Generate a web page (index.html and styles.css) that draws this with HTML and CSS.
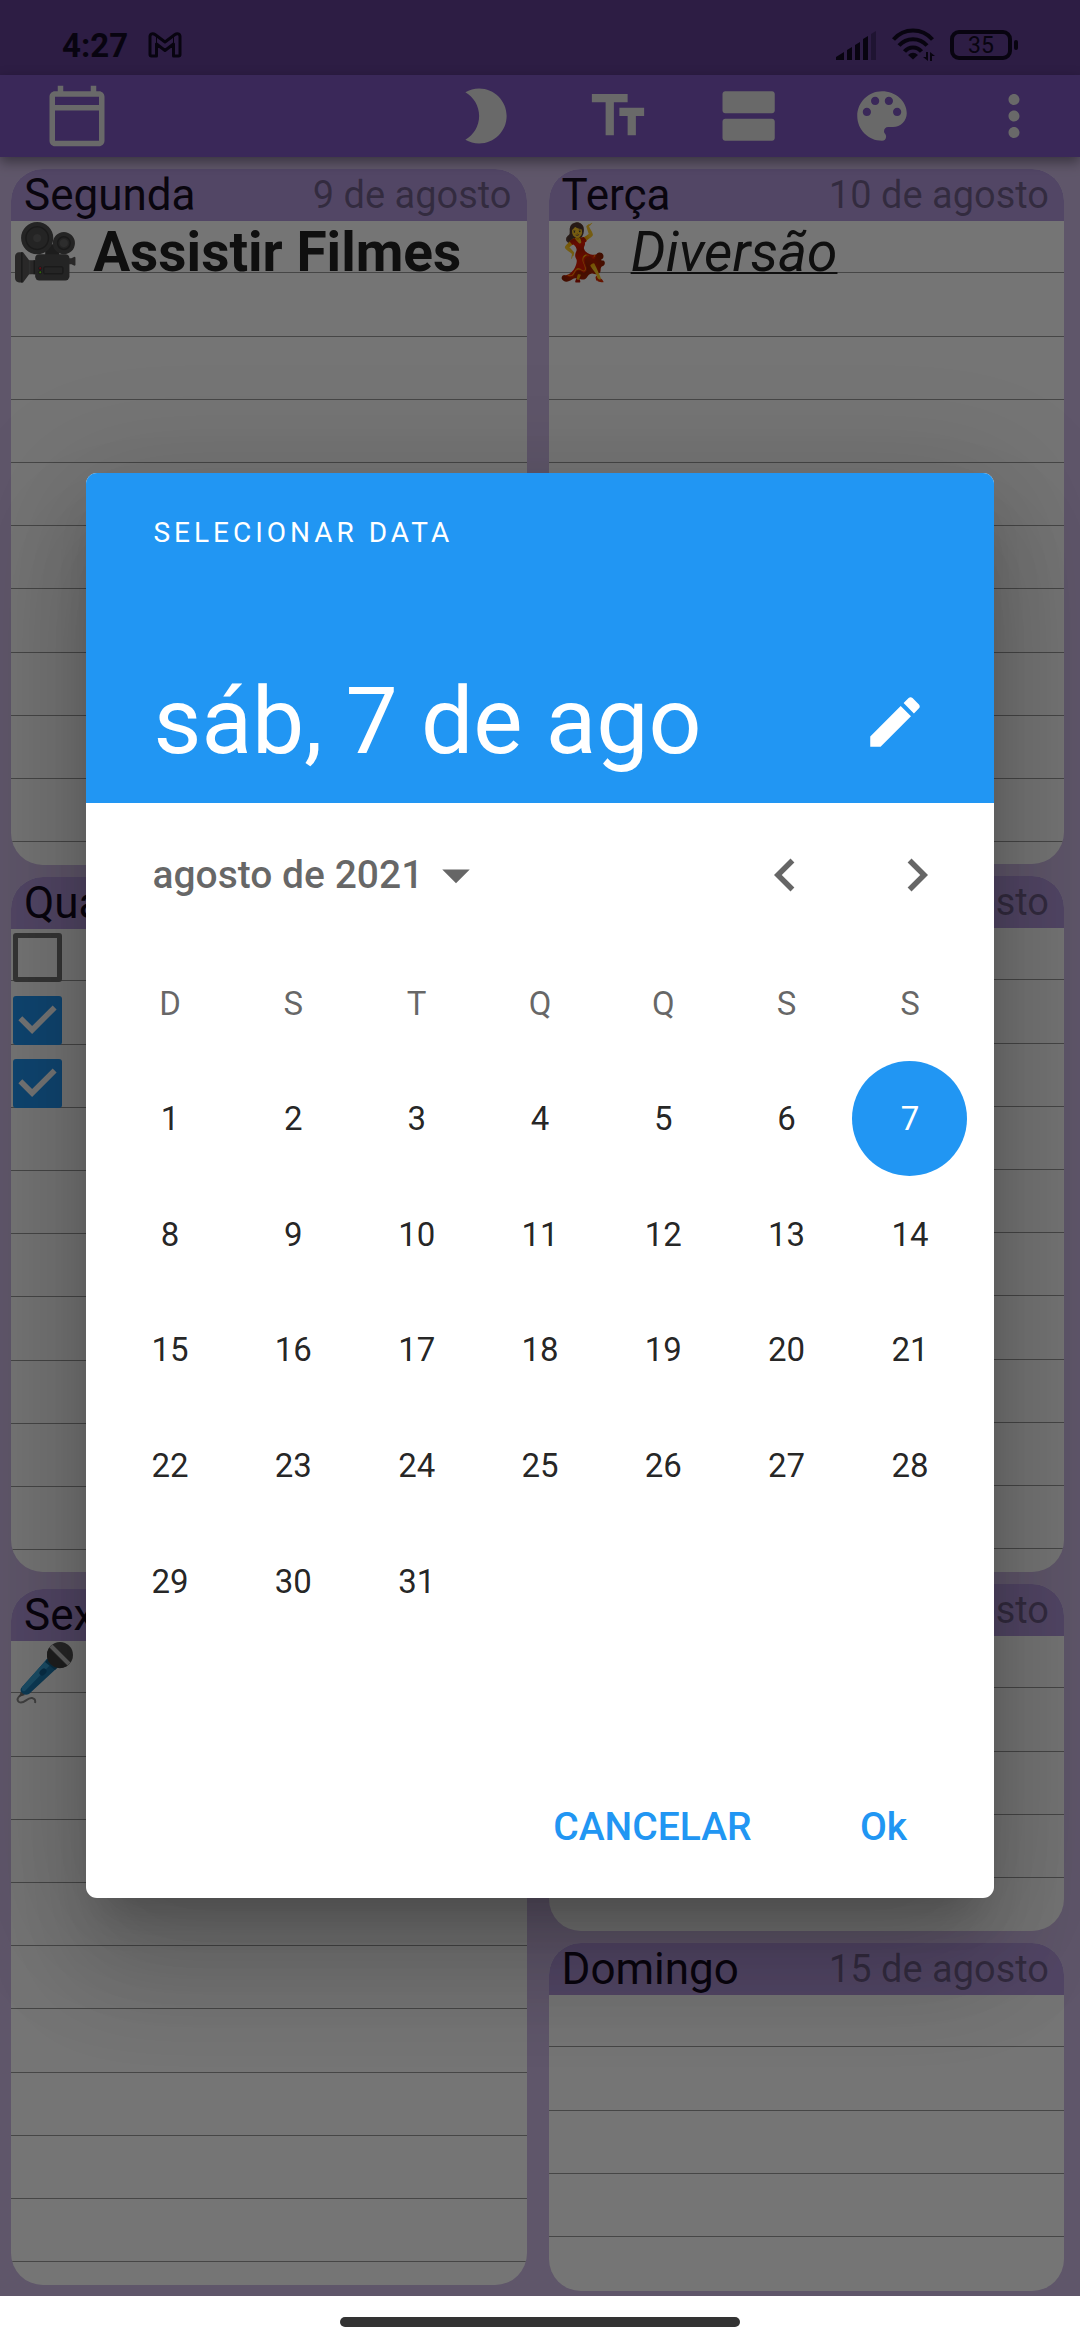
FILE: index.html
```html
<!DOCTYPE html>
<html lang="pt-BR">
<head>
<meta charset="utf-8">
<meta name="viewport" content="width=device-width, initial-scale=1">
<title>Agenda semanal</title>
<link rel="stylesheet" href="styles.css">
</head>
<body>
<div class="screen">
  <div class="status-bar">
    <span class="status-time">4:27</span>
    <svg class="status-mail" viewBox="0 0 34 26" aria-hidden="true"><path d="M2 4.500C2 1.500 5 1 7 2.500L17 10 27 2.500C29 1 32 1.500 32 4.500V22.500Q32 24 30.500 24H25.500V12L17 18.500 8.500 12V24H3.500Q2 24 2 22.500Z" fill="none" stroke="currentColor" stroke-width="3" stroke-linejoin="round"/><path d="M8.500 12V4M25.500 12V4" stroke="currentColor" stroke-width="1"/></svg>
    <svg class="status-signal" viewBox="0 0 40 29" aria-hidden="true"><path d="M0 29v-3l8-5v8zM11 29V19l5-3v13zM19 29V14l5-3v18zM27 29V8l5-3v24z" fill="currentColor"/><path d="M35 29V3l5-3v29z" fill="currentColor" opacity=".35"/></svg>
    <svg class="status-wifi" viewBox="0 0 42 34" aria-hidden="true"><g fill="none" stroke="currentColor" stroke-width="4"><path d="M1.500 11.500C12 -.5 30 -.5 40.500 11.500"/><path d="M7 17.500C14.500 9 27.500 9 35 17.500"/><path d="M12.500 23.500C17 18 25 18 29.500 23.500"/></g><path d="M16 27Q21 22.500 26 27L21 31.500z" fill="currentColor"/><path d="M36 24v9l-5-4h3v-5zM38 33v-9l5 4h-3v5z" fill="currentColor"/></svg>
    <span class="battery"><span class="battery-case">35</span><span class="battery-tip"></span></span>
  </div>

  <header class="app-bar">
    <button class="bar-button bar-button-start" aria-label="Calendário"><svg class="icon" viewBox="0 0 24 24"><path d="M20 3h-1V1h-2v2H7V1H5v2H4c-1.100 0-2 .9-2 2v16c0 1.100.9 2 2 2h16c1.100 0 2-.9 2-2V5c0-1.100-.9-2-2-2zm0 18H4V10h16v11zm0-13H4V5h16v3z"/></svg></button>
    <button class="bar-button" aria-label="Modo noturno"><svg class="icon" viewBox="0 0 24 24"><path d="M9.500 2c-1.820 0-3.530.5-5 1.350 2.990 1.730 5 4.950 5 8.650s-2.010 6.920-5 8.650c1.470.85 3.180 1.350 5 1.350 5.520 0 10-4.480 10-10S15.020 2 9.500 2z"/></svg></button>
    <button class="bar-button" aria-label="Tamanho do texto"><svg class="icon" viewBox="0 0 24 24"><path d="M2.500 4v3h5v12h3V7h5V4h-13zm19 5h-9v3h3v7h3v-7h3V9z"/></svg></button>
    <button class="bar-button" aria-label="Visualização"><svg class="icon" viewBox="0 0 24 24"><path d="M20 13H3c-.55 0-1 .45-1 1v6c0 .55.45 1 1 1h17c.55 0 1-.45 1-1v-6c0-.55-.45-1-1-1zm0-10H3c-.55 0-1 .45-1 1v6c0 .55.45 1 1 1h17c.55 0 1-.45 1-1V4c0-.55-.45-1-1-1z"/></svg></button>
    <button class="bar-button" aria-label="Cores"><svg class="icon" viewBox="0 0 24 24"><path d="M12 3c-4.970 0-9 4.030-9 9s4.030 9 9 9c.83 0 1.500-.67 1.500-1.500 0-.39-.15-.74-.39-1.010-.23-.26-.38-.61-.38-.99 0-.83.67-1.500 1.500-1.500H16c2.760 0 5-2.240 5-5 0-4.420-4.030-8-9-8zm-5.500 9c-.83 0-1.500-.67-1.500-1.500S5.670 9 6.500 9 8 9.670 8 10.500 7.330 12 6.500 12zm3-4C8.670 8 8 7.330 8 6.500S8.670 5 9.500 5s1.500.67 1.500 1.500S10.330 8 9.500 8zm5 0c-.83 0-1.500-.67-1.500-1.500S13.670 5 14.500 5s1.500.67 1.500 1.500S15.330 8 14.500 8zm3 4c-.83 0-1.500-.67-1.500-1.500S16.670 9 17.500 9s1.500.67 1.500 1.500-.67 1.500-1.500 1.500z"/></svg></button>
    <button class="bar-button" aria-label="Mais opções"><svg class="icon" viewBox="0 0 24 24"><path d="M12 8c1.100 0 2-.9 2-2s-.9-2-2-2-2 .9-2 2 .9 2 2 2zm0 2c-1.100 0-2 .9-2 2s.9 2 2 2 2-.9 2-2-.9-2-2-2zm0 6c-1.100 0-2 .9-2 2s.9 2 2 2 2-.9 2-2-.9-2-2-2z"/></svg></button>
  </header>

  <main class="planner">
    <div class="column column-left">
      <section class="day">
        <div class="day-head"><h2 class="day-name">Segunda</h2><span class="day-date">9 de agosto</span></div>
        <div class="day-lines"><p class="note note-bold"><span class="emoji">🎥</span> Assistir Filmes</p></div>
      </section>
      <section class="day">
        <div class="day-head"><h2 class="day-name">Quarta</h2></div>
        <div class="day-lines">
          <div class="task"><input class="tick" type="checkbox" aria-label="Tarefa 1"></div>
          <div class="task"><input class="tick" type="checkbox" aria-label="Tarefa 2" checked></div>
          <div class="task"><input class="tick" type="checkbox" aria-label="Tarefa 3" checked></div>
        </div>
      </section>
      <section class="day day-last">
        <div class="day-head"><h2 class="day-name">Sexta</h2></div>
        <div class="day-lines">
          <svg class="microphone" viewBox="0 0 68 63" role="img" aria-label="Microfone">
            <path d="M11 53Q4 58 8 61C13 64 16 56 21 57Q25 58 24 62" fill="none" stroke="#8d8d8d" stroke-width="2"/>
            <path d="M10 50l4 4-6 2z" fill="#777"/>
            <path d="M36 18l10 9-28 26q-4 2-7-1-3-3 0-6z" fill="#1d7fb8"/>
            <path d="M36 18l5 4-27 28q-4 1-3-4z" fill="#3aa6dc"/>
            <path d="M37 17l10 9-3 3-10-8z" fill="#14628f"/>
            <ellipse cx="32" cy="31" rx="3" ry="4" transform="rotate(45 32 31)" fill="#13639a"/>
            <circle cx="49" cy="14" r="13" fill="#565656"/>
            <path d="M38 7a13 13 0 0 0 18 18z" fill="#444"/>
            <path d="M40 5l18 18" stroke="#cfcfcf" stroke-width="4"/>
          </svg>
        </div>
      </section>
    </div>
    <div class="column">
      <section class="day">
        <div class="day-head"><h2 class="day-name">Terça</h2><span class="day-date">10 de agosto</span></div>
        <div class="day-lines"><p class="note"><span class="emoji">💃</span> <em class="note-underline">Diversão</em></p></div>
      </section>
      <section class="day">
        <div class="day-head"><h2 class="day-name">Quinta</h2><span class="day-date">12 de agosto</span></div>
        <div class="day-lines"></div>
      </section>
      <section class="day day-half">
        <div class="day-head"><h2 class="day-name">Sábado</h2><span class="day-date">14 de agosto</span></div>
        <div class="day-lines"></div>
      </section>
      <section class="day day-half">
        <div class="day-head"><h2 class="day-name">Domingo</h2><span class="day-date">15 de agosto</span></div>
        <div class="day-lines"></div>
      </section>
    </div>
  </main>

  <div class="nav-bar"><span class="nav-pill"></span></div>

  <div class="scrim">
    <div class="picker" role="dialog" aria-modal="true" aria-label="Selecionar data">
      <div class="picker-head">
        <span class="picker-label">SELECIONAR DATA</span>
        <div class="picker-row">
          <h1 class="picker-date">sáb, 7 de ago</h1>
          <button class="picker-edit" aria-label="Editar"><svg class="icon" viewBox="0 0 24 24"><path d="M3 17.250V21h3.750L17.810 9.940l-3.750-3.750L3 17.250zM20.710 7.040c.39-.39.39-1.020 0-1.410l-2.340-2.340c-.39-.39-1.020-.39-1.410 0l-1.830 1.830 3.750 3.750 1.830-1.830z"/></svg></button>
        </div>
      </div>
      <div class="month-bar">
        <button class="month-button">agosto de 2021<svg class="icon" viewBox="0 0 24 24"><path d="M7 10l5 5 5-5z"/></svg></button>
        <button class="month-step" aria-label="Mês anterior"><svg class="icon" viewBox="0 0 24 24"><path d="M15.410 7.410L14 6l-6 6 6 6 1.410-1.410L10.830 12z"/></svg></button>
        <button class="month-step" aria-label="Próximo mês"><svg class="icon" viewBox="0 0 24 24"><path d="M10 6L8.590 7.410 13.170 12l-4.580 4.590L10 18l6-6z"/></svg></button>
      </div>
      <table class="month">
        <thead><tr><th>D</th><th>S</th><th>T</th><th>Q</th><th>Q</th><th>S</th><th>S</th></tr></thead>
        <tbody>
          <tr><td><button class="date">1</button></td><td><button class="date">2</button></td><td><button class="date">3</button></td><td><button class="date">4</button></td><td><button class="date">5</button></td><td><button class="date">6</button></td><td><button class="date date-selected" aria-pressed="true">7</button></td></tr>
          <tr><td><button class="date">8</button></td><td><button class="date">9</button></td><td><button class="date">10</button></td><td><button class="date">11</button></td><td><button class="date">12</button></td><td><button class="date">13</button></td><td><button class="date">14</button></td></tr>
          <tr><td><button class="date">15</button></td><td><button class="date">16</button></td><td><button class="date">17</button></td><td><button class="date">18</button></td><td><button class="date">19</button></td><td><button class="date">20</button></td><td><button class="date">21</button></td></tr>
          <tr><td><button class="date">22</button></td><td><button class="date">23</button></td><td><button class="date">24</button></td><td><button class="date">25</button></td><td><button class="date">26</button></td><td><button class="date">27</button></td><td><button class="date">28</button></td></tr>
          <tr><td><button class="date">29</button></td><td><button class="date">30</button></td><td><button class="date">31</button></td><td></td><td></td><td></td><td></td></tr>
        </tbody>
      </table>
      <div class="picker-actions">
        <button class="action">CANCELAR</button>
        <button class="action">Ok</button>
      </div>
    </div>
  </div>
</div>
</body>
</html>
```
FILE: styles.css
```css
* {
  box-sizing: border-box;
}

body {
  margin: 0;
  font-family: Roboto, "Noto Sans", sans-serif;
}

button {
  margin: 0;
  padding: 0;
  border: 0;
  background: none;
  color: inherit;
  font: inherit;
}

h1, h2, p {
  margin: 0;
  font-weight: 400;
}

.screen {
  position: relative;
  display: flex;
  flex-direction: column;
  min-height: 100vh;
}

.icon {
  display: block;
  width: 66px;
  height: 66px;
  fill: currentColor;
}

/* Status bar */

.status-bar {
  display: flex;
  align-items: center;
  height: 75px;
  padding: 15px 62px 0 62px;
  background: #623f94;
  color: #120a24;
}

.status-time {
  margin-right: 20px;
  font-size: 33px;
  font-weight: 700;
}

.status-mail {
  width: 34px;
  height: 26px;
  margin-right: auto;
}

.status-signal {
  width: 40px;
  height: 29px;
  margin-right: 16px;
}

.status-wifi {
  width: 42px;
  height: 34px;
  margin-right: 16px;
  overflow: visible;
}

.battery {
  display: flex;
  align-items: center;
  gap: 2px;
}

.battery-case {
  width: 62px;
  height: 30px;
  border: 4px solid;
  border-radius: 9px;
  font-size: 23px;
  line-height: 24px;
  text-align: center;
}

.battery-tip {
  width: 4px;
  height: 10px;
  border-radius: 2px;
  background: currentColor;
}

/* App bar */

.app-bar {
  position: relative;
  display: flex;
  height: 82px;
  background: #7e57c2;
  color: #e4e4e4;
  box-shadow: 0 5px 12px rgba(0, 0, 0, .4);
}

.bar-button {
  display: grid;
  place-items: center;
  width: 132px;
}

.bar-button-start {
  width: 154px;
  margin-right: auto;
}

/* Week planner */

.planner {
  flex: 1;
  display: flex;
  gap: 22px;
  padding: 12px 16px 5px 11px;
  background: #cfbce6;
}

.column {
  flex: 1;
  display: flex;
  flex-direction: column;
  gap: 12px;
}

.column-left {
  padding-bottom: 6px;
}

.day {
  flex: 2 0 0;
  display: flex;
  flex-direction: column;
  border-radius: 32px;
  background: #fff;
  overflow: hidden;
}

.day-half {
  flex-grow: 1;
}

.day-last {
  margin-top: 5px;
}

.day-head {
  display: flex;
  align-items: center;
  justify-content: space-between;
  height: 52px;
  padding: 0 15px 0 13px;
  background: #b399dd;
}

.day-name {
  color: #140c20;
  font-size: 44px;
  line-height: 52px;
}

.day-date {
  color: rgba(0, 0, 0, .38);
  font-size: 38px;
  line-height: 52px;
}

/* Ruled paper: five lines for every 316px */
.day-lines {
  flex: 1;
  background: linear-gradient(
    transparent 51px, #9a9a9a 51px 52px,
    transparent 52px 115px, #9a9a9a 115px 116px,
    transparent 116px 178px, #9a9a9a 178px 179px,
    transparent 179px 241px, #9a9a9a 241px 242px,
    transparent 242px 304px, #9a9a9a 304px 305px,
    transparent 305px) 0 0 / 100% 316px;
}

.note {
  color: #222;
  font-size: 55px;
  line-height: 63px;
}

.note-bold {
  font-weight: 700;
}

.note-underline {
  text-decoration: underline 2px;
}

.emoji {
  font-family: "Noto Color Emoji", sans-serif;
}

.microphone {
  display: block;
  width: 68px;
  height: 63px;
}

.task {
  height: 63px;
  padding: 4px 2px;
}

.tick {
  appearance: none;
  display: block;
  width: 49px;
  height: 49px;
  margin: 0;
  border: 5px solid #757575;
  border-radius: 3px;
}

.tick:checked {
  border: 0;
  background: #2196f3;
}

.tick:checked::before {
  content: "";
  display: block;
  height: 100%;
  background: #fff;
  clip-path: polygon(39% 78%, 11% 50%, 19% 42%, 39% 62%, 81% 20%, 89% 28%);
}

/* System navigation */

.nav-bar {
  display: grid;
  place-items: center;
  height: 44px;
  padding-top: 8px;
  background: #fff;
}

.nav-pill {
  width: 37%;
  height: 10px;
  border-radius: 5px;
  background: #333;
}

/* Date picker */

.scrim {
  position: absolute;
  inset: 0 0 44px;
  display: grid;
  place-items: center;
  padding-top: 75px;
  background: rgba(0, 0, 0, .54);
  overflow: hidden;
}

.picker {
  width: 84%;
  border-radius: 11px;
  background: #fff;
  overflow: hidden;
  box-shadow:
    0 30px 42px -19px rgba(0, 0, 0, .2),
    0 66px 104px 8px rgba(0, 0, 0, .14),
    0 25px 126px 22px rgba(0, 0, 0, .12);
}

.picker-head {
  display: flex;
  flex-direction: column;
  justify-content: space-between;
  height: 330px;
  padding: 43px 33px 20px 67px;
  background: #2196f3;
  color: #fff;
}

.picker-label {
  font-size: 28px;
  line-height: 33px;
  letter-spacing: 4px;
}

.picker-row {
  display: flex;
  align-items: center;
  justify-content: space-between;
}

.picker-date {
  font-size: 93px;
  line-height: 122px;
}

.picker-edit {
  display: grid;
  place-items: center;
  width: 132px;
  height: 122px;
}

.month-bar {
  display: flex;
  align-items: center;
  height: 143px;
  padding: 0 11px 0 66px;
  color: rgba(0, 0, 0, .6);
}

.month-button {
  display: flex;
  align-items: center;
  margin-right: auto;
  font-size: 39px;
  font-weight: 500;
}

.month-step {
  display: grid;
  place-items: center;
  width: 132px;
  height: 132px;
}

.month {
  width: calc(100% - 44px);
  height: 693px;
  margin: 0 22px 116px;
  border-collapse: collapse;
  table-layout: fixed;
  font-size: 33px;
}

.month th,
.month td {
  padding: 0;
  text-align: center;
}

.month th {
  height: 115px;
  color: rgba(0, 0, 0, .6);
  font-weight: 400;
}

.date {
  display: block;
  width: 115px;
  height: 115px;
  margin: 0 auto;
  border-radius: 50%;
  color: rgba(0, 0, 0, .87);
}

.date-selected {
  background: #2196f3;
  color: #fff;
}

.picker-actions {
  display: flex;
  align-items: center;
  justify-content: flex-end;
  gap: 22px;
  height: 143px;
  padding: 0 22px;
  color: #2196f3;
}

.action {
  min-width: 176px;
  height: 99px;
  padding: 0 22px;
  font-size: 39px;
  font-weight: 500;
}
```
